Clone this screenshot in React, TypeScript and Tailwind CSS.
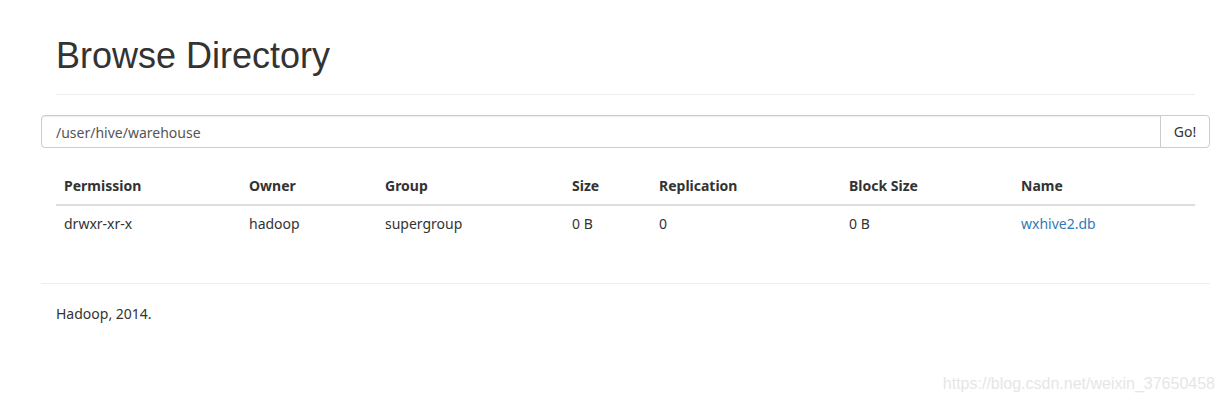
import React from "react"

const cols = [
  { label: "Permission", w: "w-[185px]" },
  { label: "Owner", w: "w-[136px]" },
  { label: "Group", w: "w-[187px]" },
  { label: "Size", w: "w-[87px]" },
  { label: "Replication", w: "w-[190px]" },
  { label: "Block Size", w: "w-[172px]" },
  { label: "Name", w: "" },
]

const rows = [
  ["drwxr-xr-x", "hadoop", "supergroup", "0 B", "0", "0 B", "wxhive2.db"],
]

function App() {
  return (
    <div className="relative min-h-[403px] bg-white font-['Noto_Sans',sans-serif] text-[14px] leading-[20px] text-[#333]">
      <div className="pl-[41px] pr-[15px]">
        <div className="mx-[15px] pt-[36px] pb-[18px] border-b border-[#eee]">
          <h1 className="text-[36px] leading-[40px] font-normal font-['Liberation_Sans',Arial,sans-serif]">Browse Directory</h1>
        </div>

        <div className="mt-[20px] flex h-[33px]">
          <input
            type="text"
            defaultValue="/user/hive/warehouse"
            className="flex-1 min-w-0 h-full px-[14px] pt-px border border-[#ccc] rounded-l-[4px] text-[#555] text-[14px] font-['Noto_Sans',sans-serif] outline-none shadow-[inset_0_1px_1px_rgba(0,0,0,0.075)]"
          />
          <button className="h-full w-[50px] -ml-px border border-[#ccc] rounded-r-[4px] bg-white text-[#333] text-[14px] font-['Noto_Sans',sans-serif]">
            Go!
          </button>
        </div>

        <div className="mx-[15px] mt-[20px]">
          <table className="w-full border-collapse text-left">
            <thead>
              <tr>
                {cols.map((c) => (
                  <th key={c.label} className={`${c.w} px-[8px] py-[8px] font-bold border-b-2 border-[#ddd]`}>
                    {c.label}
                  </th>
                ))}
              </tr>
            </thead>
            <tbody>
              {rows.map((r, i) => (
                <tr key={i}>
                  {r.map((v, j) => (
                    <td key={j} className="px-[8px] py-[8px] border-t border-[#ddd]">
                      {j === 6 ? <a href="#" className="text-[#337ab7]">{v}</a> : v}
                    </td>
                  ))}
                </tr>
              ))}
            </tbody>
          </table>
        </div>

        <div className="mt-[41px] border-t border-[#eee] pt-[20px] px-[15px]">
          <p>Hadoop, 2014.</p>
        </div>
      </div>

      <div className="absolute right-[10px] top-[373px] text-[16px] leading-[22px] text-[#e6e6e6] font-['Liberation_Sans',Arial,sans-serif]">
        https://blog.csdn.net/weixin_37650458
      </div>
    </div>
  )
}

export default App
